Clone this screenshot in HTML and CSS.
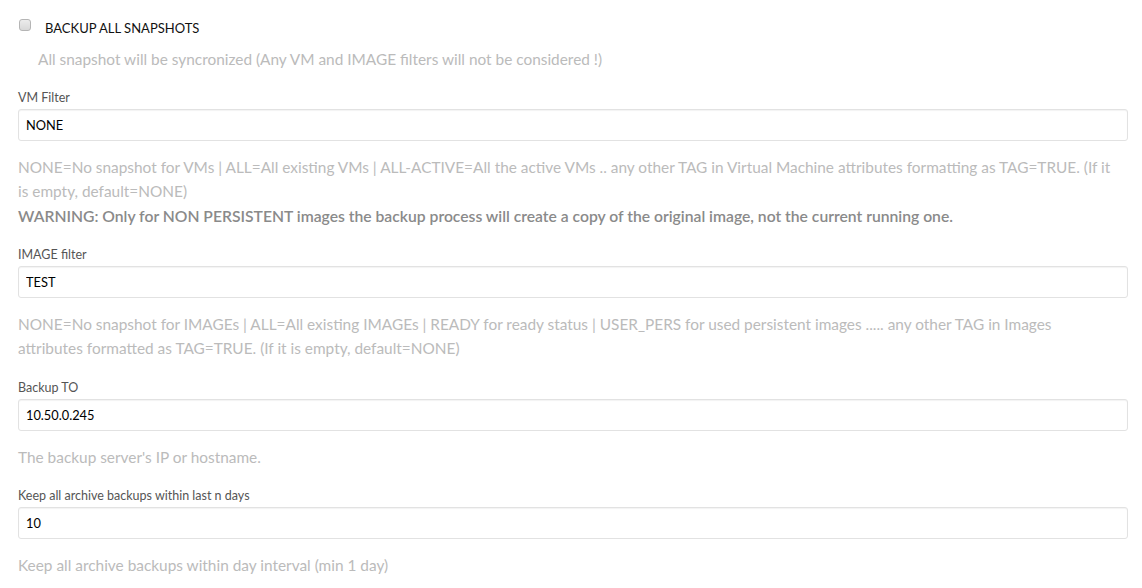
FILE: index.html
```html
<!DOCTYPE html>
<html>
<head>
<meta charset="utf-8">
<link rel="stylesheet" href="styles.css">
</head>
<body>
<form class="form">
  <div class="check-group">
    <label class="check-row"><input type="checkbox" class="check"><span class="check-label">BACKUP ALL SNAPSHOTS</span></label>
    <p class="help help-indent">All snapshot will be syncronized (Any VM and IMAGE filters will not be considered !)</p>
  </div>

  <div class="group">
    <label class="label">VM Filter</label>
    <input class="field" type="text" value="NONE">
    <p class="help">NONE=No snapshot for VMs | ALL=All existing VMs | ALL-ACTIVE=All the active VMs .. any other TAG in Virtual Machine attributes formatting as TAG=TRUE. (If it is empty, default=NONE)</p>
    <p class="warning">WARNING: Only for NON PERSISTENT images the backup process will create a copy of the original image, not the current running one.</p>
  </div>

  <div class="group">
    <label class="label">IMAGE filter</label>
    <input class="field" type="text" value="TEST">
    <p class="help">NONE=No snapshot for IMAGEs | ALL=All existing IMAGEs | READY for ready status | USER_PERS for used persistent images ..... any other TAG in Images attributes formatted as TAG=TRUE. (If it is empty, default=NONE)</p>
  </div>

  <div class="group">
    <label class="label">Backup TO</label>
    <input class="field" type="text" value="10.50.0.245">
    <p class="help">The backup server's IP or hostname.</p>
  </div>

  <div class="group">
    <label class="label">Keep all archive backups within last n days</label>
    <input class="field" type="text" value="10">
    <p class="help">Keep all archive backups within day interval (min 1 day)</p>
  </div>
</form>
</body>
</html>
```

FILE: styles.css
```css
html, body {
  margin: 0;
  padding: 0;
  background: #ffffff;
}
body {
  font-family: Lato, "Open Sans", "Liberation Sans", sans-serif;
  color: #333;
}
.form {
  padding: 18px 14px 0 18px;
  display: flex;
  flex-direction: column;
}
.check-group {
  margin-bottom: 17px;
}
.check-row {
  display: flex;
  align-items: center;
  height: 20px;
}
.check {
  -webkit-appearance: none;
  appearance: none;
  box-sizing: border-box;
  width: 12px;
  height: 12px;
  margin: 0 0 0 1px;
  border: 1px solid #b5b5b5;
  border-radius: 3px;
  background: linear-gradient(#ececec, #d8d8d8);
  position: relative;
  top: -3px;
}
.check-label {
  margin-left: 14px;
  font-size: 13px;
  color: #111;
}
.help {
  margin: 0 9px 0 0;
  font-size: 15.4px;
  line-height: 24.5px;
  color: #bbbbbb;
}
.help-indent {
  margin-top: 9px;
  padding-left: 20px;
}
.group {
  display: flex;
  flex-direction: column;
  margin-bottom: 18px;
}
.label {
  font-size: 12.5px;
  line-height: 17px;
  color: #555;
  margin-bottom: 3px;
}
.field {
  box-sizing: border-box;
  height: 32px;
  width: 100%;
  margin: 0 0 14px 0;
  padding: 0 7px;
  border: 1px solid #e2e2e2;
  border-radius: 3px;
  box-shadow: inset 0 1px 1px rgba(0,0,0,0.05);
  font-family: Lato, "Open Sans", "Liberation Sans", sans-serif;
  font-size: 12.8px;
  color: #000;
  outline: none;
}
.warning {
  margin: 0;
  font-size: 15.7px;
  line-height: 24px;
  font-weight: 600;
  color: #8a8a8a;
}
```
